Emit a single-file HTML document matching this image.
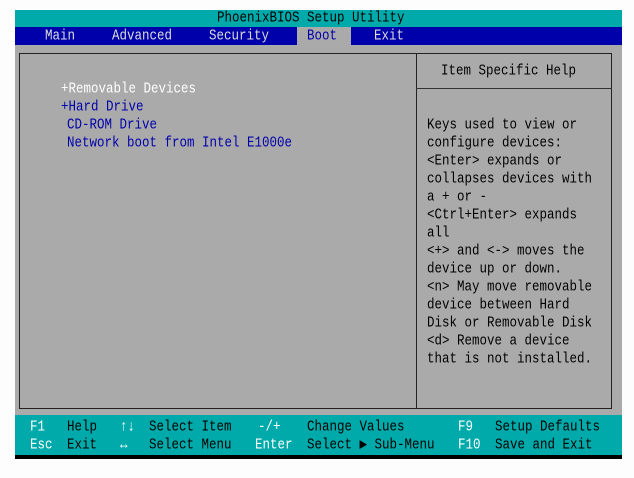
<!DOCTYPE html>
<html><head><meta charset="utf-8"><style>
body{margin:0;width:634px;height:478px;background:#fdfdfd;position:relative;overflow:hidden;font-family:"Liberation Mono","DejaVu Sans Mono",monospace;font-size:12.5px;}
.a{position:absolute;white-space:pre;line-height:18px;transform:scaleY(1.2);transform-origin:0 50%;}
.w{color:#fff}.b{color:#0000aa}.k{color:#000}.l{color:#ddd}
</style></head><body>
<div style="position:absolute;left:15px;top:10px;width:607px;height:17px;background:#00aaaa"></div>
<div style="position:absolute;left:15px;top:27px;width:607px;height:18px;background:#0000aa"></div>
<div style="position:absolute;left:15px;top:45px;width:607px;height:370px;background:#aaaaaa"></div>
<div style="position:absolute;left:19px;top:53px;width:591px;height:354px;border:1px solid #222"></div>
<div style="position:absolute;left:416px;top:53px;width:1px;height:356px;background:#222"></div>
<div style="position:absolute;left:416px;top:88px;width:196px;height:1px;background:#333"></div>
<div style="position:absolute;left:15px;top:415px;width:607px;height:40px;background:#00aaaa"></div>
<div style="position:absolute;left:15px;top:455px;width:607px;height:4px;background:#000"></div>
<div style="position:absolute;left:297px;top:27px;width:54px;height:18px;background:#aaaaaa"></div>
<div class="a k" style="left:217px;top:9px">PhoenixBIOS Setup Utility</div>
<div class="a l" style="left:45px;top:27px">Main</div>
<div class="a l" style="left:112px;top:27px">Advanced</div>
<div class="a l" style="left:209px;top:27px">Security</div>
<div class="a b" style="left:307px;top:27px">Boot</div>
<div class="a l" style="left:374px;top:27px">Exit</div>
<div class="a w" style="left:61px;top:80px">+Removable Devices</div>
<div class="a b" style="left:61px;top:98px">+Hard Drive</div>
<div class="a b" style="left:67px;top:116px">CD-ROM Drive</div>
<div class="a b" style="left:67px;top:134px">Network boot from Intel E1000e</div>
<div class="a k" style="left:441px;top:62px">Item Specific Help</div>
<div class="a k" style="left:427px;top:116px">Keys used to view or</div>
<div class="a k" style="left:427px;top:134px">configure devices:</div>
<div class="a k" style="left:427px;top:152px">&lt;Enter&gt; expands or</div>
<div class="a k" style="left:427px;top:170px">collapses devices with</div>
<div class="a k" style="left:427px;top:188px">a + or -</div>
<div class="a k" style="left:427px;top:206px">&lt;Ctrl+Enter&gt; expands</div>
<div class="a k" style="left:427px;top:224px">all</div>
<div class="a k" style="left:427px;top:242px">&lt;+&gt; and &lt;-&gt; moves the</div>
<div class="a k" style="left:427px;top:260px">device up or down.</div>
<div class="a k" style="left:427px;top:278px">&lt;n&gt; May move removable</div>
<div class="a k" style="left:427px;top:296px">device between Hard</div>
<div class="a k" style="left:427px;top:314px">Disk or Removable Disk</div>
<div class="a k" style="left:427px;top:332px">&lt;d&gt; Remove a device</div>
<div class="a k" style="left:427px;top:350px">that is not installed.</div>
<div class="a w" style="left:30px;top:418px">F1</div><div class="a k" style="left:67px;top:418px">Help</div>
<div class="a w" style="left:120px;top:418px">↑↓</div><div class="a k" style="left:149px;top:418px">Select Item</div>
<div class="a w" style="left:258px;top:418px">-/+</div><div class="a k" style="left:307px;top:418px">Change Values</div>
<div class="a w" style="left:458px;top:418px">F9</div><div class="a k" style="left:495px;top:418px">Setup Defaults</div>
<div class="a w" style="left:30px;top:436px">Esc</div><div class="a k" style="left:67px;top:436px">Exit</div>
<div class="a w" style="left:120px;top:436px">↔</div><div class="a k" style="left:149px;top:436px">Select Menu</div>
<div class="a w" style="left:255px;top:436px">Enter</div><div class="a k" style="left:307px;top:436px">Select ▶ Sub-Menu</div>
<div class="a w" style="left:458px;top:436px">F10</div><div class="a k" style="left:495px;top:436px">Save and Exit</div>
</body></html>
